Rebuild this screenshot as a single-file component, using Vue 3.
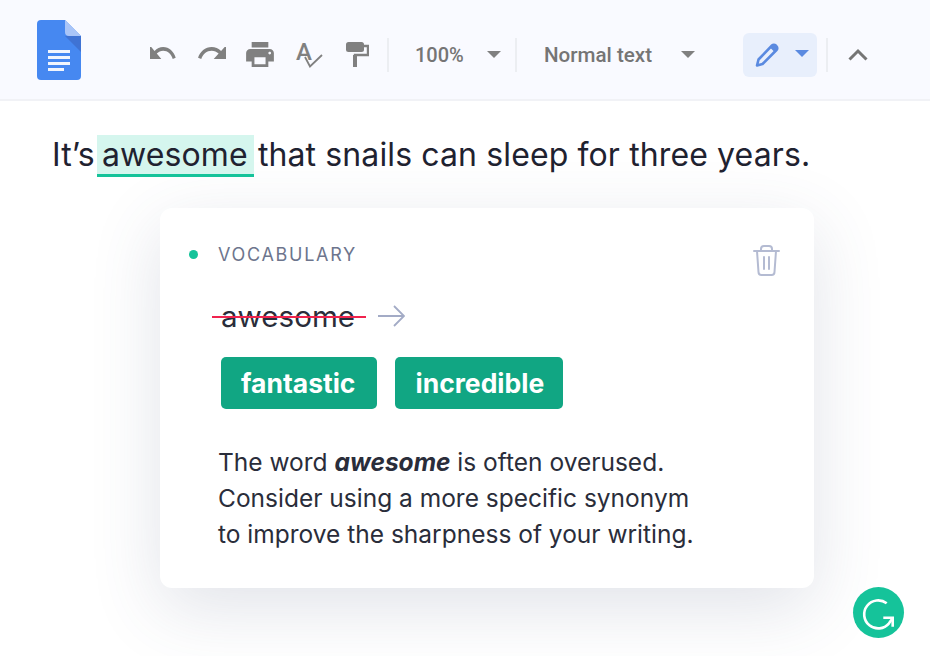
<template>
<div class="page">
    <div class="toolbar">
        <svg class="doc" viewBox="0 0 44 60" width="44" height="60">
            <path d="M4 0h24l16 16v40a4 4 0 0 1-4 4H4a4 4 0 0 1-4-4V4a4 4 0 0 1 4-4z" fill="#4688f1"/>
            <path d="M28 16l16 16V16z" fill="#3f73d4"/>
            <path d="M28 0l16 16H32a4 4 0 0 1-4-4z" fill="#a9c5f8"/>
            <path d="M11 30h22v3H11zM11 36h22v3H11zM11 42h22v3H11zM11 48h16v3H11z" fill="#f1f5fd"/>
        </svg>

        <div class="tools">
            <svg class="undo" viewBox="2 8 21.5 10" width="27" height="15" preserveAspectRatio="none"><path fill="#808080" d="M12.5 8c-2.65 0-5.05.99-6.9 2.6L2 7v9h9l-3.62-3.62c1.39-1.16 3.16-1.88 5.12-1.88 3.54 0 6.55 2.31 7.6 5.5l2.37-.78C21.08 11.03 17.15 8 12.5 8z"/></svg>
            <svg class="redo" viewBox="1.5 8 20.5 10" width="28" height="15" preserveAspectRatio="none"><path fill="#808080" d="M18.4 10.6C16.55 8.99 14.15 8 11.5 8c-4.65 0-8.58 3.03-9.96 7.22L3.9 16c1.05-3.19 4.05-5.5 7.6-5.5 1.95 0 3.73.72 5.12 1.88L13 16h9V7l-3.6 3.6z"/></svg>
            <svg class="print" viewBox="2 3 20 18" width="28" height="25"><path fill="#808080" d="M19 8H5c-1.66 0-3 1.34-3 3v6h4v4h12v-4h4v-6c0-1.66-1.34-3-3-3zm-3 11H8v-5h8v5zm3-7c-.55 0-1-.45-1-1s.45-1 1-1 1 .45 1 1-.45 1-1 1zm-1-9H6v4h12V3z"/></svg>
            <svg class="spell" viewBox="0 0 27 27" width="27" height="27">
                <text x="0" y="18" class="spell-a">A</text>
                <path d="M9 15l5 9.500L26 13" fill="none" stroke="#808080" stroke-width="1.800"/>
            </svg>
            <svg class="paint" viewBox="0 0 23 25" width="23" height="25">
                <rect x="0" y="0" width="18" height="10" rx="2.500" fill="#808080"/>
                <path d="M17 4h5v9H9v12" fill="none" stroke="#808080" stroke-width="2.400"/>
                <rect x="7" y="13" width="4" height="12" fill="#808080"/>
            </svg>
            <div class="divider first"></div>
            <div class="zoom-label">100%</div>
            <div class="caret zoom-caret"></div>
            <div class="divider second"></div>
            <div class="style-label">Normal text</div>
            <div class="caret style-caret"></div>
            <div class="mode">
                <svg viewBox="0 0 26 26" width="26" height="26">
                    <path d="M18 3.5a2.6 2.6 0 0 1 3.7 0l.8.8a2.6 2.6 0 0 1 0 3.7L8.5 22 3 23.5 4.500 17.500z" fill="none" stroke="#5a8ae0" stroke-width="2.600" stroke-linejoin="round"/>
                    <path d="M18 3.500a2.600 2.600 0 0 1 3.700 0l.8.8a2.600 2.600 0 0 1 0 3.700l-2 2-4.500-4.500z" fill="#5a8ae0"/>
                </svg>
                <div class="caret blue"></div>
            </div>
            <div class="divider third"></div>
            <svg class="chevron" viewBox="0 0 20 13" width="20" height="13"><path d="M1.500 11.500L10 3l8.500 8.500" fill="none" stroke="#757575" stroke-width="3"/></svg>
        </div>
    </div>

    <div class="sentence">It’s <span class="mark">awesome</span> that snails can sleep for three years.</div>

    <div class="card">
        <div class="card-head">
            <span class="dot"></span>
            <span class="label">VOCABULARY</span>
            <svg class="trash" viewBox="0 0 27 31" width="27" height="31" fill="none" stroke="#b4bbd2" stroke-width="2" stroke-linecap="round" stroke-linejoin="round">
                <path d="M1 6h25M8 6V4a3 3 0 0 1 3-3h5a3 3 0 0 1 3 3v2M4 6l1.500 21a3 3 0 0 0 3 3h10a3 3 0 0 0 3-3L23 6M11 12v12M16 12v12"/>
            </svg>
        </div>
        <div class="replace">
            <span class="old">awesome<span class="strike"></span></span>
            <svg class="arrow" viewBox="0 0 27 22" width="27" height="22" fill="none" stroke="#a3abc6" stroke-width="1.800"><path d="M0 11h26M16 1l10 10-10 10"/></svg>
        </div>
        <div class="options">
            <div class="option" v-for="word in words" :key="word">{{word}}</div>
        </div>
        <div class="text">
            The word <b><i>awesome</i></b> is often overused.<br>
            Consider using a more specific synonym<br>
            to improve the sharpness of your writing.
        </div>
    </div>

    <div class="logo">
        <svg viewBox="0 0 51 51" width="51" height="51" fill="none" stroke="#fff" stroke-width="2.600">
            <path d="M33.700 16.300A14 14 0 1 0 36 36.300L39 32"/>
            <path d="M30.300 30.700h9.400v9"/>
        </svg>
    </div>
</div>
</template>

<script setup>
const words = ['fantastic', 'incredible'];
</script>

<style>
html, body {
    margin: 0;
    background: #fff;
}
</style>

<style scoped>
.page {
    position: relative;
    width: 930px;
    height: 656px;
    overflow: hidden;
    background: #fff;
    font-family: Inter, "Liberation Sans", sans-serif;
    color: #1f2230;
}
.toolbar {
    box-sizing: border-box;
    display: flex;
    align-items: center;
    height: 101px;
    padding-left: 37px;
    background: #f9faff;
    border-bottom: 2px solid #f1f2f6;
}
.doc {
    margin-top: 1px;
}
.tools {
    display: flex;
    align-items: center;
    margin-left: 69px;
    height: 44px;
    margin-top: 10px;
    font-family: Roboto, "Liberation Sans", sans-serif;
}
.tools svg {
    flex: none;
}
.redo {
    margin-left: 21px;
}
.print {
    margin-left: 20px;
}
.spell {
    margin-left: 22px;
    margin-top: 2px;
    overflow: visible;
}
.spell-a {
    font-family: Roboto, sans-serif;
    font-size: 24px;
    font-weight: 500;
    fill: #808080;
}
.paint {
    margin-left: 23px;
}
.divider {
    width: 2px;
    height: 34px;
    background: #eceef2;
    flex: none;
}
.first {
    margin-left: 18px;
}
.zoom-label {
    margin-left: 26px;
    font-size: 20px;
    font-weight: 500;
    color: #757575;
    width: 50px;
}
.caret {
    width: 0;
    height: 0;
    border-left: 7px solid transparent;
    border-right: 7px solid transparent;
    border-top: 7px solid #808080;
    flex: none;
}
.zoom-caret {
    margin-left: 22px;
}
.second {
    margin-left: 14px;
}
.style-label {
    margin-left: 27px;
    font-size: 20.6px;
    font-weight: 500;
    color: #757575;
    width: 108px;
    white-space: nowrap;
}
.style-caret {
    margin-left: 29px;
}
.mode {
    display: flex;
    align-items: center;
    box-sizing: border-box;
    width: 74px;
    height: 44px;
    margin-left: 48px;
    padding-left: 11px;
    background: #e8effc;
    border-radius: 6px;
}
.mode .caret {
    margin-left: 15px;
    margin-bottom: 3px;
}
.blue {
    border-top-color: #5a8ae0;
}
.third {
    margin-left: 9px;
}
.chevron {
    margin-left: 20px;
}
.sentence {
    margin: 33px 0 0 52px;
    font-size: 32px;
    line-height: 42px;
    letter-spacing: 0.12px;
    white-space: nowrap;
}
.mark {
    display: inline-block;
    margin: 0 -5px 0 -7px;
    padding: 0 6px 0 5px;
    background: #d5f6ee;
    border-bottom: 3px solid #15c39a;
    line-height: 39px;
}
.card {
    box-sizing: border-box;
    width: 654px;
    height: 380px;
    margin: 31px 0 0 160px;
    padding: 30px 34px 0 29px;
    background: #fff;
    border-radius: 12px;
    box-shadow: 0 20px 70px rgba(70, 80, 120, 0.16);
}
.card-head {
    display: flex;
    align-items: center;
    height: 32px;
}
.dot {
    width: 9px;
    height: 9px;
    border-radius: 50%;
    background: #15c39a;
}
.label {
    margin-left: 20px;
    font-size: 18px;
    letter-spacing: 1.7px;
    color: #6d758d;
}
.trash {
    margin-left: auto;
    margin-top: 12px;
}
.replace {
    display: flex;
    align-items: center;
    margin: 26px 0 0 23px;
    height: 40px;
}
.old {
    position: relative;
    padding: 0 11px 0 9px;
    font-size: 29.6px;
    color: #2a2d3a;
}
.strike {
    position: absolute;
    left: 0;
    right: 0;
    top: 50%;
    height: 2px;
    background: #f0234e;
}
.arrow {
    margin-left: 12px;
}
.options {
    display: flex;
    gap: 18px;
    margin: 21px 0 0 32px;
}
.option {
    height: 52px;
    line-height: 52px;
    background: #11a683;
    border-radius: 5px;
    color: #fff;
    font-size: 26.5px;
    font-weight: 700;
}
.option:first-child {
    padding: 0 22px 0 20px;
}
.option:last-child {
    padding: 0 19px 0 20px;
}
.text {
    margin: 35px 0 0 29px;
    font-size: 24.5px;
    line-height: 36px;
    color: #2a2d3a;
    white-space: nowrap;
}
.logo {
    position: absolute;
    left: 853px;
    top: 587px;
    width: 51px;
    height: 51px;
    border-radius: 50%;
    background: #15c39a;
}
</style>
